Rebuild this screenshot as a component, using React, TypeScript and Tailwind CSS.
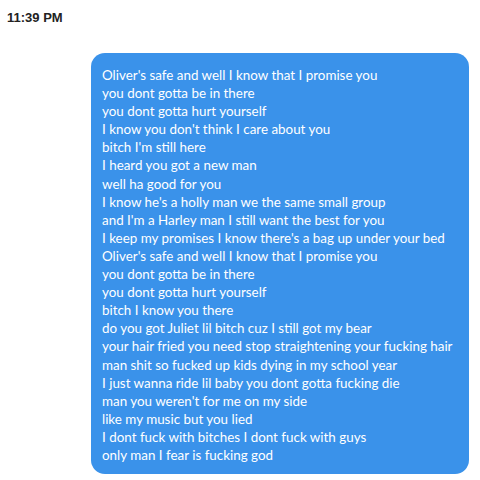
const lines = [
  "Oliver's safe and well I know that I promise you",
  "you dont gotta be in there",
  "you dont gotta hurt yourself",
  "I know you don't think I care about you",
  "bitch I'm still here",
  "I heard you got a new man",
  "well ha good for you",
  "I know he's a holly man we the same small group",
  "and I'm a Harley man I still want the best for you",
  "I keep my promises I know there's a bag up under your bed",
  "Oliver's safe and well I know that I promise you",
  "you dont gotta be in there",
  "you dont gotta hurt yourself",
  "bitch I know you there",
  "do you got Juliet lil bitch cuz I still got my bear",
  "your hair fried you need stop straightening your fucking hair",
  "man shit so fucked up kids dying in my school year",
  "I just wanna ride lil baby you dont gotta fucking die",
  "man you weren't for me on my side",
  "like my music but you lied",
  "I dont fuck with bitches I dont fuck with guys",
  "only man I fear is fucking god",
];

const App = () => {
  return (
    <div className="w-[480px] h-[480px] bg-white overflow-hidden">
      {/* time */}
      <div
        className="pl-[7px] pt-[10px] text-[13px] font-semibold text-[#222] leading-[16px]"
        style={{ fontFamily: '"Liberation Sans", Arial, sans-serif' }}
      >
        11:39 PM
      </div>

      {/* message bubble */}
      <div className="flex justify-end pr-[11px] mt-[27px]">
        <div
          className="w-[378px] bg-[#3a92ea] rounded-[14px] pl-[11px] pr-2 pt-[13px] pb-[10px] text-white text-[13.4px] leading-[18.1px]"
          style={{ fontFamily: 'Lato, "Liberation Sans", sans-serif' }}
        >
          {lines.map((line, i) => (
            <div key={i} className="whitespace-nowrap">
              {line}
            </div>
          ))}
        </div>
      </div>
    </div>
  );
};

export default App;
